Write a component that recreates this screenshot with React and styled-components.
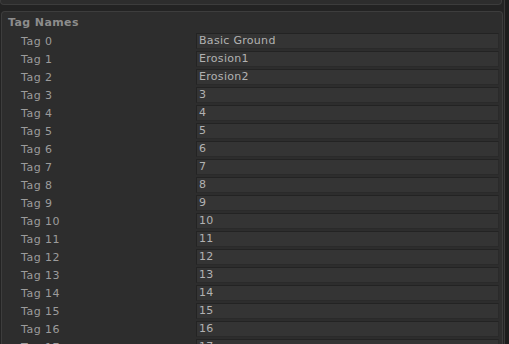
import React from "react";
import styled, { createGlobalStyle } from "styled-components";

const Global = createGlobalStyle`
  html, body { margin: 0; padding: 0; background: #232323; overflow: hidden; }
  body { font-family: "DejaVu Sans", Verdana, sans-serif; }
`;

const Page = styled.div`
  display: flex;
  width: 509px;
  height: 344px;
  overflow: hidden;
`;

const Main = styled.div`
  flex: 1;
  display: flex;
  flex-direction: column;
  min-width: 0;
`;

const Strip = styled.div`
  width: 4px;
  background: #1c1c1c;
  border-left: 1px solid #3a3a3a;
`;

const TopPanel = styled.div`
  flex-shrink: 0;
  height: 4px;
  margin-right: 2px;
  background: #2d2d2d;
  border: 1px solid #3c3c3c;
  border-top: none;
  border-radius: 0 0 4px 4px;
`;

const Panel = styled.div`
  flex-shrink: 0;
  margin: 6px 1px 0 1px;
  background: #2d2d2d;
  border: 1px solid #3d3d3d;
  border-bottom: none;
  border-radius: 4px 4px 0 0;
  padding: 2px 0 0 0;
`;

const Header = styled.div`
  font-size: 11px;
  font-weight: bold;
  letter-spacing: 0.4px;
  color: #8c8c8c;
  height: 18px;
  line-height: 17px;
  padding-left: 6px;
`;

const Row = styled.div`
  display: grid;
  grid-template-columns: 194px 1fr;
  height: 18px;
  align-items: center;
`;

const Label = styled.div`
  font-size: 11px;
  letter-spacing: 0.5px;
  color: #9c9c9c;
  padding-left: 19px;
  white-space: nowrap;
`;

const Field = styled.div`
  height: 14px;
  margin-right: 3px;
  background: #343434;
  border: 1px solid #232323;
  border-right-color: #2a2a2a;
  border-bottom-color: #2a2a2a;
  font-size: 11px;
  letter-spacing: 0.3px;
  line-height: 14px;
  color: #b2b2b2;
  padding-left: 2px;
  white-space: nowrap;
`;

const values = ["Basic Ground", "Erosion1", "Erosion2"];

export default function App() {
  const rows = Array.from({ length: 18 }, (_, i) => ({
    label: `Tag ${i}`,
    value: values[i] ?? String(i),
  }));
  return (
    <>
      <Global />
      <Page>
        <Main>
          <TopPanel />
          <Panel>
            <Header>Tag Names</Header>
            {rows.map((r) => (
              <Row key={r.label}>
                <Label>{r.label}</Label>
                <Field>{r.value}</Field>
              </Row>
            ))}
          </Panel>
        </Main>
        <Strip />
      </Page>
    </>
  );
}
